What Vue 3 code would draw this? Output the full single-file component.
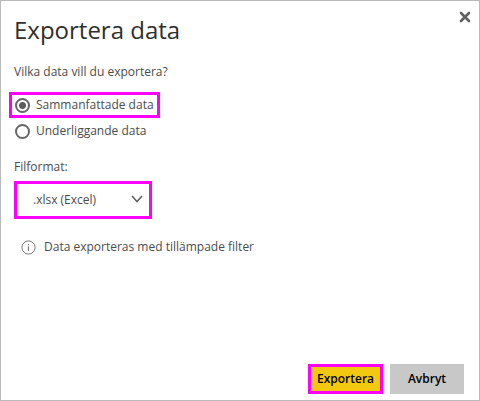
<script setup>
import { ref } from 'vue'

const scope = ref('summary')
const format = ref('xlsx')
</script>

<template>
  <form class="dialog" role="dialog" aria-labelledby="title" @submit.prevent>
    <header class="head">
      <h1 id="title">Exportera data</h1>
      <button class="close" type="button" aria-label="Stäng">
        <svg width="12" height="12" viewBox="0 0 12 12" aria-hidden="true">
          <path d="M2 2L10 10M10 2L2 10" stroke="#606060" stroke-width="2.6" stroke-linecap="round" />
        </svg>
      </button>
    </header>

    <fieldset class="choices">
      <legend>Vilka data vill du exportera?</legend>
      <label class="choice marked">
        <input v-model="scope" type="radio" name="scope" value="summary" />
        <span>Sammanfattade data</span>
      </label>
      <label class="choice">
        <input v-model="scope" type="radio" name="scope" value="underlying" />
        <span>Underliggande data</span>
      </label>
    </fieldset>

    <div class="field">
      <label for="format">Filformat:</label>
      <div class="picker">
        <select id="format" v-model="format">
          <option value="xlsx">.xlsx (Excel)</option>
        </select>
        <svg class="chevron" width="12" height="10" viewBox="0 0 12 10" aria-hidden="true">
          <path d="M1 1L6 6.6L11 1" fill="none" stroke="#606060" stroke-width="1.5" />
        </svg>
      </div>
    </div>

    <p class="note">
      <svg width="15" height="15" viewBox="0 0 15 15" aria-hidden="true">
        <circle cx="7.5" cy="7.5" r="6.6" fill="none" stroke="#777" />
        <path d="M7.5 6.2V11M7.5 4V5.2" stroke="#777" stroke-width="1.1" />
      </svg>
      <span>Data exporteras med tillämpade filter</span>
    </p>

    <footer class="actions">
      <button class="primary" type="submit">Exportera</button>
      <button class="secondary" type="button">Avbryt</button>
    </footer>
  </form>
</template>

<style>
body {
  background: #fff;
}
</style>

<style scoped>
.dialog {
  box-sizing: border-box;
  display: flex;
  flex-direction: column;
  min-height: 100vh;
  padding: 8px 15px 6px 8px;
  border: 1px solid #bababa;
  background: #fff;
  color: #4c4c4c;
  font: 12px/18px "Open Sans", "Noto Sans", sans-serif;
}
.head {
  display: flex;
  justify-content: space-between;
  align-items: flex-start;
}
h1 {
  margin: 4px 0 0 5px;
  color: #2f2f2f;
  font-size: 24px;
  font-weight: 400;
  line-height: 34px;
}
button {
  font: inherit;
}
.close {
  display: flex;
  margin: 0 -9px 0 0;
  padding: 2px;
  border: 0;
  background: none;
}
.choices {
  margin: 16px 0 0;
  padding: 0;
  border: 0;
}
legend {
  margin: 0 0 11px;
  padding: 0 5px;
}
.choice {
  display: flex;
  align-items: center;
  gap: 6px;
  box-sizing: border-box;
  width: 151px;
  height: 26px;
  padding: 0 3px;
  border: 3px solid transparent;
  white-space: nowrap;
}
.marked {
  border-color: #f0f;
}
.choice input {
  appearance: none;
  flex: none;
  box-sizing: border-box;
  width: 15px;
  height: 15px;
  margin: 0;
  border: 2px solid #666;
  border-radius: 50%;
}
.choice input:checked {
  background: radial-gradient(circle, #5c5c5c 3px, transparent 4px);
}
.field {
  margin: 14px 0 0 5px;
}
.field label {
  display: block;
}
.picker {
  display: grid;
  align-items: center;
  width: 138px;
  margin-top: 5px;
}
.picker > * {
  grid-area: 1 / 1;
}
select {
  appearance: none;
  width: 100%;
  height: 38px;
  padding: 0 32px 0 16px;
  border: 3px solid #f0f;
  border-radius: 0;
  background: #fff;
  color: inherit;
  font: inherit;
}
.chevron {
  justify-self: end;
  margin-right: 9px;
  pointer-events: none;
}
.note {
  display: flex;
  align-items: center;
  gap: 8px;
  margin: 19px 0 20px 12px;
}
.actions {
  display: flex;
  justify-content: flex-end;
  gap: 7px;
  margin-top: auto;
}
.actions button {
  height: 30px;
  padding: 0;
  color: #000;
  font-weight: 600;
}
.actions .primary {
  width: 75px;
  border: 3px solid #f0f;
  background: #f2c811;
}
.actions .secondary {
  width: 74px;
  border: 0;
  background: #c8c8c8;
}
</style>
